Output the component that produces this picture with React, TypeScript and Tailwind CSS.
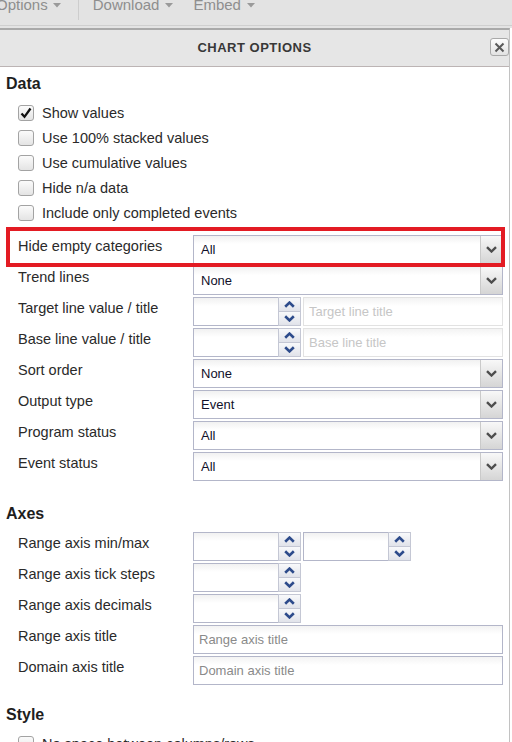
import React from "react";

const Caret = () => (
  <svg width="8" height="5" viewBox="0 0 8 5" className="shrink-0">
    <path d="M0 0 L8 0 L4 4.5 Z" fill="#9a9a9a" />
  </svg>
);

const Checkbox = ({ checked }: { checked?: boolean }) => (
  <div className="w-4 h-4 shrink-0 rounded-[3px] border border-[#a3a3a3] bg-gradient-to-b from-[#fbfbfb] to-[#e4e4e4] flex items-center justify-center">
    {checked && (
      <svg width="14" height="14" viewBox="0 0 14 14">
        <path d="M2.5 7.5 L5.5 10.8 L11.5 2.5" fill="none" stroke="#111" strokeWidth="2.3" strokeLinejoin="miter" />
      </svg>
    )}
  </div>
);

const CheckRow = ({ label, checked }: { label: string; checked?: boolean }) => (
  <div className="h-[25px] flex items-center pl-[18px]">
    <Checkbox checked={checked} />
    <span className="ml-[8px] text-[14.5px] leading-[18px] text-[#2a2a2a]">{label}</span>
  </div>
);

const Select = ({ value }: { value: string }) => (
  <div className="w-[310px] h-[29px] border border-[#b3b6c9] flex bg-gradient-to-b from-[#f1f1f1] via-white via-[30%] to-white">
    <div className="flex-1 flex items-center pl-[7px] text-[13px] text-[#10102a]">{value}</div>
    <div className="w-[22px] border-l border-[#cacaca] bg-gradient-to-b from-[#f8f8f8] to-[#d5d5d5] flex items-center justify-center">
      <svg width="11" height="7" viewBox="0 0 11 7">
        <path d="M1 1.2 L5.5 5.5 L10 1.2" fill="none" stroke="#4d4d4d" strokeWidth="2.4" />
      </svg>
    </div>
  </div>
);

const SpinBtn = ({ up }: { up?: boolean }) => (
  <div
    className={
      "flex-1 border border-[#c4c7d4] bg-gradient-to-b from-[#f8f9fb] to-[#e1e3ea] flex items-center justify-center " +
      (up ? "" : "border-t-0")
    }
  >
    <svg width="11" height="7" viewBox="0 0 11 7">
      <path
        d={up ? "M1.2 5.8 L5.5 1.6 L9.8 5.8" : "M1.2 1.2 L5.5 5.4 L9.8 1.2"}
        fill="none"
        stroke="#2d4b8b"
        strokeWidth="2.6"
      />
    </svg>
  </div>
);

const Spinner = () => (
  <div className="w-[108px] h-[29px] flex shrink-0">
    <div className="w-[85px] border border-[#b3b6c9] border-r-0 bg-gradient-to-b from-[#f1f1f1] via-white via-[30%] to-white" />
    <div className="w-[23px] flex flex-col">
      <SpinBtn up />
      <SpinBtn />
    </div>
  </div>
);

const TextInput = ({ placeholder, light }: { placeholder: string; light?: boolean }) => (
  <div
    className={
      "flex-1 h-[29px] border flex items-center pl-[5px] text-[13px] bg-gradient-to-b from-[#f3f3f3] via-white via-[30%] to-white " +
      (light ? "border-[#e2e2e2] text-[#c6c6c6]" : "border-[#b3b6c9] text-[#8a8a8a]")
    }
  >
    {placeholder}
  </div>
);

const Row = ({ label, children }: { label: string; children: React.ReactNode }) => (
  <div className="flex h-[29px] mb-[2px]">
    <div className="w-[193px] shrink-0 pl-[18px] pt-[2px] text-[14.5px] leading-[18px] text-[#2a2a2a]">{label}</div>
    <div className="w-[310px] flex gap-[2px]">{children}</div>
  </div>
);

const Heading = ({ children, className }: { children: React.ReactNode; className?: string }) => (
  <div className={"pl-[6px] text-[16px] font-bold leading-[20px] text-[#1e1e1e] " + (className ?? "")}>{children}</div>
);

export default function App() {
  return (
    <div className="relative w-[512px] h-[742px] overflow-hidden bg-white font-['Liberation_Sans',Arial,sans-serif]">
      {/* toolbar */}
      <div className="h-[26px] bg-[#e3e3e3] border-b border-[#cfcfcf] flex items-start overflow-hidden text-[15px] leading-[15px] text-[#8e8e8e]">
        <span className="ml-[-4px] mt-[-3px]">Options</span>
        <span className="ml-[5px] mt-[3px]"><Caret /></span>
        <div className="ml-[17px] w-px h-[20px] bg-[#cdcdcd]" />
        <span className="ml-[14px] mt-[-3px]">Download</span>
        <span className="ml-[6px] mt-[3px]"><Caret /></span>
        <span className="ml-[20px] mt-[-3px]">Embed</span>
        <span className="ml-[6px] mt-[3px]"><Caret /></span>
      </div>
      <div className="h-[2px] bg-[#e3e3e3]" />

      {/* panel */}
      <div className="w-[510px] border-t-2 border-r border-[#a9a9a9] border-r-[#c2c2c2] h-[760px]">
        <div className="relative h-[37px] bg-[#e6e6e6] border-b border-[#bcb4b4] flex items-center justify-center">
          <span className="text-[13px] font-bold tracking-[0.5px] text-[#383838]">CHART OPTIONS</span>
          <div className="absolute right-[0px] top-[8px] w-[19px] h-[18px] rounded-[3px] border border-[#a9a9a9] bg-gradient-to-b from-[#fdfdfd] to-[#e2e2e2] flex items-center justify-center">
            <svg width="11" height="11" viewBox="0 0 11 11">
              <path d="M1.5 1.5 L9.5 9.5 M9.5 1.5 L1.5 9.5" stroke="#5a5a5a" strokeWidth="2" />
            </svg>
          </div>
        </div>

        <div className="pt-[7px]">
          <Heading>Data</Heading>
          <div className="mt-[6px]">
            <CheckRow label="Show values" checked />
            <CheckRow label="Use 100% stacked values" />
            <CheckRow label="Use cumulative values" />
            <CheckRow label="Hide n/a data" />
            <CheckRow label="Include only completed events" />
          </div>

          <div className="mt-[10px]">
            <Row label="Hide empty categories"><Select value="All" /></Row>
            <Row label="Trend lines"><Select value="None" /></Row>
            <Row label="Target line value / title">
              <Spinner />
              <TextInput placeholder="Target line title" light />
            </Row>
            <Row label="Base line value / title">
              <Spinner />
              <TextInput placeholder="Base line title" light />
            </Row>
            <Row label="Sort order"><Select value="None" /></Row>
            <Row label="Output type"><Select value="Event" /></Row>
            <Row label="Program status"><Select value="All" /></Row>
            <Row label="Event status"><Select value="All" /></Row>
          </div>

          <Heading className="mt-[23px]">Axes</Heading>
          <div className="mt-[8px]">
            <Row label="Range axis min/max">
              <Spinner />
              <Spinner />
            </Row>
            <Row label="Range axis tick steps"><Spinner /></Row>
            <Row label="Range axis decimals"><Spinner /></Row>
            <Row label="Range axis title"><TextInput placeholder="Range axis title" /></Row>
            <Row label="Domain axis title"><TextInput placeholder="Domain axis title" /></Row>
          </div>

          <Heading className="mt-[20px]">Style</Heading>
          <div className="mt-[6px]">
            <CheckRow label="No space between columns/rows" />
          </div>
        </div>
      </div>

      {/* red annotation box */}
      <div className="absolute left-[6px] top-[227px] w-[499px] h-[40px] border-4 border-[#e31b23] pointer-events-none" />
    </div>
  );
}
